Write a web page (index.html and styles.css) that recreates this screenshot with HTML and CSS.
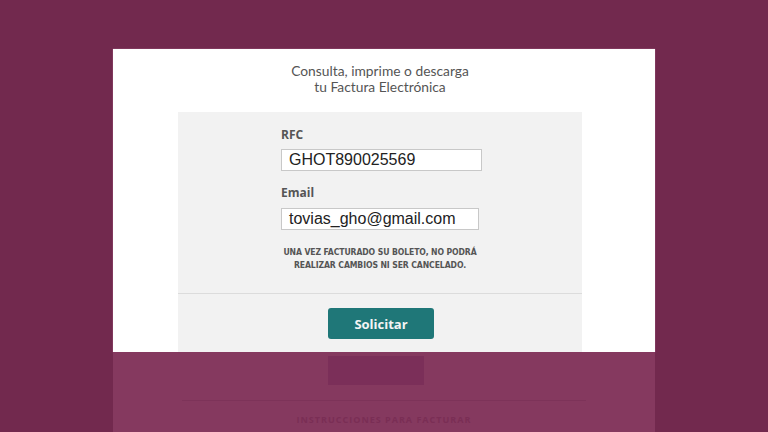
FILE: index.html
```html
<!DOCTYPE html>
<html lang="es">
<head>
<meta charset="utf-8">
<title>Factura Electrónica</title>
<link rel="stylesheet" href="styles.css">
</head>
<body>
<div class="stage">
  <div class="card">
    <p class="title">Consulta, imprime o descarga<br>tu Factura Electrónica</p>
    <div class="panel">
      <div class="form">
        <label class="label">RFC</label>
        <div class="input">GHOT890025569</div>
        <label class="label label-email">Email</label>
        <div class="input input-email">tovias_gho@gmail.com</div>
        <p class="notice">UNA VEZ FACTURADO SU BOLETO, NO PODRÁ<br>REALIZAR CAMBIOS NI SER CANCELADO.</p>
      </div>
      <div class="actions">
        <button class="btn">Solicitar</button>
      </div>
    </div>
  </div>
  <div class="reflection">
    <div class="ghost-btn"></div>
    <div class="ghost-line"></div>
    <div class="ghost-text">INSTRUCCIONES PARA FACTURAR</div>
  </div>
</div>
</body>
</html>
```
FILE: styles.css
```css
html, body {
  margin: 0;
  padding: 0;
}
body {
  width: 768px;
  height: 432px;
  overflow: hidden;
  background: #72294e;
  font-family: "Open Sans", "Noto Sans", sans-serif;
}
.stage {
  padding: 49px 0 0 113px;
}
.card {
  width: 534px;
  height: 303px;
  padding-right: 8px;
  background: #ffffff;
  display: flex;
  flex-direction: column;
  align-items: center;
  box-shadow: 0 0 1px rgba(255, 200, 230, 0.6);
}
.title {
  margin: 14px 0 0;
  font-family: "Lato", "Open Sans", sans-serif;
  font-size: 13.8px;
  line-height: 16px;
  color: #555555;
  text-align: center;
}
.panel {
  margin-top: 17px;
  width: 404px;
  flex: 1;
  background: #f2f2f2;
  display: flex;
  flex-direction: column;
}
.form {
  padding: 15px 0 0 103px;
  display: flex;
  flex-direction: column;
  align-items: flex-start;
}
.label {
  font-size: 12px;
  line-height: 16px;
  font-weight: 700;
  color: #555555;
}
.label-email {
  margin-top: 14px;
}
.input {
  margin-top: 6px;
  width: 192px;
  height: 20px;
  padding-left: 7px;
  background: #ffffff;
  border: 1px solid #c8c8c8;
  font-family: "Liberation Sans", Arial, sans-serif;
  font-size: 16px;
  line-height: 20px;
  color: #222222;
}
.input-email {
  margin-top: 7px;
  width: 189px;
}
.notice {
  margin: 16px 0 0 -103px;
  width: 404px;
  text-align: center;
  font-family: "DejaVu Sans", sans-serif;
  font-stretch: condensed;
  font-size: 8.6px;
  line-height: 13px;
  font-weight: 700;
  color: #555555;
  letter-spacing: -0.1px;
}
.actions {
  margin-top: 21px;
  border-top: 1px solid #dcdcdc;
  padding-top: 14px;
  display: flex;
  justify-content: center;
}
.btn {
  margin-left: 2px;
  width: 106px;
  height: 31px;
  border: none;
  border-radius: 3px;
  background: #1f7778;
  color: #f4f4f4;
  font-family: "Open Sans", sans-serif;
  font-size: 13px;
  font-weight: 700;
  cursor: pointer;
}
.reflection {
  width: 542px;
  height: 80px;
  background: #85395f;
  display: flex;
  flex-direction: column;
  align-items: center;
}
.ghost-btn {
  margin: 4px 0 0 -16px;
  width: 96px;
  height: 29px;
  background: #7b2f59;
}
.ghost-line {
  margin-top: 15px;
  width: 404px;
  height: 1px;
  background: #7d3359;
}
.ghost-text {
  margin-top: 12px;
  font-size: 9px;
  font-weight: 700;
  color: #7a2e55;
  letter-spacing: 1px;
}
```
